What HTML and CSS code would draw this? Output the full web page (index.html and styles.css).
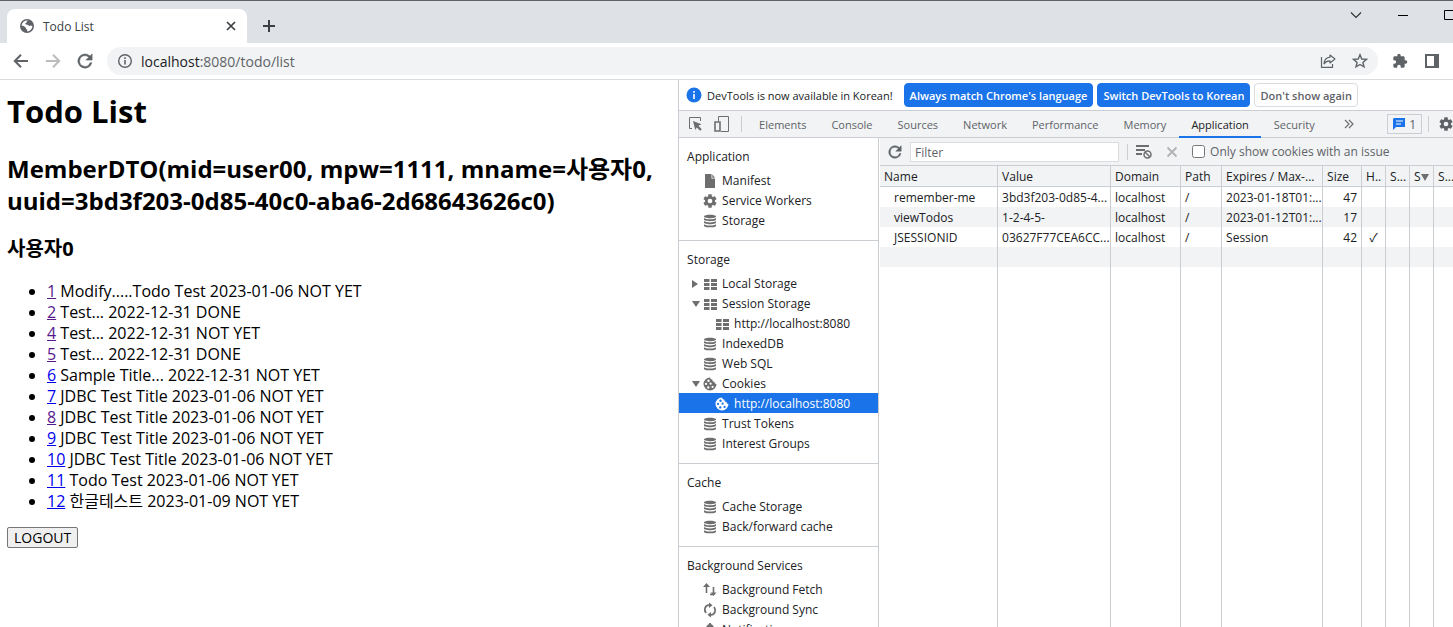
FILE: index.html
```html
<!DOCTYPE html>
<html lang="ko">

<head>
  <meta charset="UTF-8" />
  <meta name="viewport" content="width=device-width, initial-scale=1.0" />
  <title>Todo List</title>
  <link rel="stylesheet" href="styles.css">
</head>

<body>
  <!-- shared icons -->
  <svg class="sprite" aria-hidden="true">
    <symbol id="reload" viewBox="3 3 18 18">
      <path fill="currentColor" d="M17.65 6.35A8 8 0 1 0 19.73 14h-2.08A6 6 0 1 1 12 6c1.66 0 3.14.69 4.22 1.78L13 11h7V4z" stroke="currentColor" stroke-width=".6" />
    </symbol>
    <symbol id="database" viewBox="0 0 16 16">
      <path fill="currentColor" d="M2 3.5C2 1.2 14 1.2 14 3.5S2 5.800 2 3.500zM2 5c1.500 1.800 10.500 1.800 12 0v1.500c0 2.200-12 2.200-12 0zM2 8.100c1.500 1.800 10.500 1.800 12 0v1.500c0 2.200-12 2.200-12 0zM2 11.200c1.500 1.800 10.500 1.800 12 0v1.500c0 2.200-12 2.200-12 0z" />
    </symbol>
    <symbol id="grid" viewBox="0 0 16 16">
      <path fill="currentColor" d="M2 3h5.500v3H2zM9 3h6v3H9zM2 7h5.500v3H2zM9 7h6v3H9zM2 11h5.500v3H2zM9 11h6v3H9z" />
    </symbol>
    <symbol id="gear" viewBox="0 0 24 24">
      <path fill="currentColor" d="M19.430 12.980c.04-.320.07-.640.07-.980s-.03-.660-.07-.980l2.110-1.650c.190-.150.240-.420.120-.640l-2-3.460c-.120-.220-.390-.300-.610-.220l-2.490 1c-.520-.400-1.080-.730-1.690-.980l-.380-2.650A.488.488 0 0 0 14 2h-4c-.250 0-.460.180-.490.420l-.380 2.650c-.610.250-1.170.590-1.690.980l-2.490-1c-.230-.090-.490 0-.610.220l-2 3.460c-.130.220-.070.490.120.640l2.110 1.650c-.040.320-.070.650-.070.980s.030.660.070.980l-2.110 1.650c-.190.150-.240.420-.120.640l2 3.460c.120.220.390.300.610.220l2.490-1c.520.400 1.080.730 1.690.980l.380 2.650c.030.240.240.420.490.420h4c.250 0 .460-.180.490-.420l.380-2.650c.610-.250 1.170-.590 1.690-.980l2.490 1c.230.090.490 0 .610-.220l2-3.460c.120-.220.070-.490-.120-.640zM12 15.500a3.500 3.500 0 1 1 0-7 3.500 3.500 0 0 1 0 7z" />
    </symbol>
    <symbol id="cookie" viewBox="0 0 16 16">
      <path fill="currentColor" fill-rule="evenodd" d="M8 1.500a6.500 6.500 0 1 0 6.500 6.500c-1.300 0-2-.8-2-2-1.500 0-2.300-.9-2-2.200C9.200 3.600 8.300 2.800 8 1.500zM6.500 3.500a1.200 1.200 0 1 1 0 2.400 1.200 1.200 0 0 1 0-2.400zM4 6.800a1.100 1.100 0 1 1 0 2.200 1.100 1.100 0 0 1 0-2.200zM8.600 6.600a1.100 1.100 0 1 1 0 2.200 1.100 1.100 0 0 1 0-2.200zM6.300 10.200a1.200 1.200 0 1 1 0 2.400 1.200 1.200 0 0 1 0-2.400zM10.600 9.800a1.100 1.100 0 1 1 0 2.200 1.100 1.100 0 0 1 0-2.200z" />
    </symbol>
  </svg>

  <div class="browser">

    <header class="tab-strip">
      <div class="browser-tab">
        <svg class="icon16" viewBox="0 0 16 16">
          <circle cx="8" cy="8" r="7" fill="#5f6368" />
          <path fill="#fff" d="M9.500 2.600C8 3 7.600 3.700 7.800 4.600c-1.300.1-1.600.8-1.300 1.700.9.700 2.200.2 2.800 1 .4.900 1.500.9 2.200.3l1.900.4a5.500 5.500 0 0 1-5.200 5.500v-1.900c-.9-.2-1.200-.7-1.200-1.600L5.200 8.200l-2.600-.700A5.500 5.500 0 0 1 9.500 2.600z" />
        </svg>
        <span class="browser-tab-title">Todo List</span>
        <button class="icon-btn" aria-label="Close tab">
          <svg class="icon16" viewBox="0 0 16 16"><path d="M4 4l8 8M12 4l-8 8" stroke="#3c4043" stroke-width="1.700" /></svg>
        </button>
      </div>
      <button class="icon-btn new-tab" aria-label="New tab">
        <svg class="icon16" viewBox="0 0 16 16"><path d="M8 2v12M2 8h12" stroke="#3c4043" stroke-width="2" /></svg>
      </button>
      <div class="window-controls">
        <button class="icon-btn" aria-label="Search tabs">
          <svg width="12" height="12" viewBox="0 0 12 12"><path d="M1 3.500l5 5 5-5" fill="none" stroke="#333" stroke-width="1.200" /></svg>
        </button>
        <button class="icon-btn" aria-label="Minimize">
          <svg width="10" height="12" viewBox="0 0 10 12"><path d="M0 6.500h10" stroke="#000" /></svg>
        </button>
        <button class="icon-btn" aria-label="Maximize">
          <svg width="9" height="12" viewBox="0 0 9 12"><path d="M10 1.500H.500v9H10" fill="none" stroke="#000" /></svg>
        </button>
      </div>
    </header>

    <nav class="toolbar">
      <button class="icon-btn" aria-label="Back">
        <svg class="icon16" viewBox="0 0 16 16"><path d="M15 8H2M8 1.800L1.800 8 8 14.200" fill="none" stroke="#5f6368" stroke-width="2" /></svg>
      </button>
      <button class="icon-btn" aria-label="Forward">
        <svg class="icon16" viewBox="0 0 16 16"><path d="M1 8h13M8 1.800L14.200 8 8 14.200" fill="none" stroke="#babcbe" stroke-width="2" /></svg>
      </button>
      <button class="icon-btn" aria-label="Reload">
        <svg class="icon16"><use href="#reload" /></svg>
      </button>
      <div class="omnibox">
        <svg class="icon16" viewBox="0 0 16 16">
          <circle cx="8" cy="8" r="6.300" fill="none" stroke="#5f6368" stroke-width="1.400" />
          <path d="M8 7v4.500M8 4.300V6" stroke="#5f6368" stroke-width="1.600" />
        </svg>
        <a class="url" href="#">localhost<span>:8080/todo/list</span></a>
        <button class="icon-btn" aria-label="Share">
          <svg class="icon16" viewBox="0 0 16 16" fill="none" stroke="#5f6368" stroke-width="1.200">
            <path d="M1.500 4v10.400h11V11" />
            <path d="M10 2l5 4-5 4V7.800C7.500 7.800 5.500 8.600 4 10.800 4.400 7 6.500 4.600 10 4.200z" stroke-linejoin="round" />
          </svg>
        </button>
        <button class="icon-btn" aria-label="Bookmark">
          <svg class="icon16" viewBox="0 0 16 16"><path d="M8 1.800l1.800 4.200 4.600.4-3.500 3 1.100 4.500L8 11.500l-4 2.400 1.100-4.500-3.500-3 4.600-.4z" fill="none" stroke="#5f6368" stroke-width="1.400" /></svg>
        </button>
      </div>
      <button class="icon-btn" aria-label="Extensions">
        <svg class="icon16" viewBox="0 0 24 24"><path fill="#5f6368" d="M20.500 11H19V7c0-1.100-.9-2-2-2h-4V3.500a2.500 2.500 0 0 0-5 0V5H4c-1.100 0-2 .9-2 2v3.800h1.500a2.700 2.700 0 0 1 0 5.400H2V20c0 1.100.9 2 2 2h3.800v-1.500a2.700 2.700 0 0 1 5.400 0V22H17c1.100 0 2-.9 2-2v-4h1.500a2.500 2.500 0 0 0 0-5z" /></svg>
      </button>
      <button class="icon-btn" aria-label="Side panel">
        <svg class="icon16" viewBox="0 0 16 16"><path d="M2 2h12v12H2z" fill="none" stroke="#5f6368" stroke-width="2" /><path d="M10 2h4v12h-4z" fill="#5f6368" /></svg>
      </button>
    </nav>

    <div class="content">

      <main class="page">
        <h1>Todo List</h1>
        <h2>MemberDTO(mid=user00, mpw=1111, mname=사용자0, uuid=3bd3f203-0d85-40c0-aba6-2d68643626c0)</h2>
        <h3>사용자0</h3>
        <ul>
          <li><a class="visited" href="#">1</a> Modify.....Todo Test 2023-01-06 NOT YET</li>
          <li><a class="visited" href="#">2</a> Test... 2022-12-31 DONE</li>
          <li><a class="visited" href="#">4</a> Test... 2022-12-31 NOT YET</li>
          <li><a class="visited" href="#">5</a> Test... 2022-12-31 DONE</li>
          <li><a href="#">6</a> Sample Title... 2022-12-31 NOT YET</li>
          <li><a href="#">7</a> JDBC Test Title 2023-01-06 NOT YET</li>
          <li><a class="visited" href="#">8</a> JDBC Test Title 2023-01-06 NOT YET</li>
          <li><a href="#">9</a> JDBC Test Title 2023-01-06 NOT YET</li>
          <li><a href="#">10</a> JDBC Test Title 2023-01-06 NOT YET</li>
          <li><a href="#">11</a> Todo Test 2023-01-06 NOT YET</li>
          <li><a href="#">12</a> 한글테스트 2023-01-09 NOT YET</li>
        </ul>
        <form onsubmit="return false">
          <button class="logout">LOGOUT</button>
        </form>
      </main>

      <section class="devtools">

        <div class="infobar">
          <svg class="icon16" viewBox="0 0 16 16">
            <circle cx="8" cy="8" r="7.500" fill="#1a73e8" />
            <path d="M8 7v5M8 4v1.800" stroke="#fff" stroke-width="1.600" />
          </svg>
          <span>DevTools is now available in Korean!</span>
          <button class="info-btn primary">Always match Chrome's language</button>
          <button class="info-btn primary">Switch DevTools to Korean</button>
          <button class="info-btn">Don't show again</button>
        </div>

        <div class="panel-bar">
          <div class="panel-tools">
            <button class="icon-btn" aria-label="Inspect">
              <svg class="icon16" viewBox="0 0 16 16"><path d="M5 12.500H2.500v-11h11V5" fill="none" stroke="#6e6e6e" /><path d="M6 5l8.500 3.300-3.100 1.500 3.400 3.400-1.600 1.600-3.400-3.400L8.300 14z" fill="#6e6e6e" /></svg>
            </button>
            <button class="icon-btn" aria-label="Toggle device">
              <svg class="icon16" viewBox="0 0 16 16" fill="none" stroke="#6e6e6e"><path d="M4.500 5V.500h10v15H7" /><path d="M1 6h5v9H1z" stroke-width="1.600" /></svg>
            </button>
            <span class="divider"></span>
          </div>
          <div class="panel-tabs">
            <button class="panel-tab">Elements</button>
            <button class="panel-tab">Console</button>
            <button class="panel-tab">Sources</button>
            <button class="panel-tab">Network</button>
            <button class="panel-tab">Performance</button>
            <button class="panel-tab">Memory</button>
            <button class="panel-tab active">Application</button>
            <button class="panel-tab">Security</button>
          </div>
          <button class="icon-btn more" aria-label="More tabs">
            <svg width="10" height="10" viewBox="0 0 10 10"><path d="M1 1l4 4-4 4M5 1l4 4-4 4" fill="none" stroke="#6e6e6e" stroke-width="1.200" /></svg>
          </button>
          <div class="panel-right">
            <button class="issues">
              <svg width="12" height="12" viewBox="0 0 12 12"><path d="M1 0h11v9H3l-3 3V1z" fill="#1a73e8" /><path d="M3 3h7M3 6h5" stroke="#fff" /></svg>
              1
            </button>
            <span class="divider"></span>
            <button class="icon-btn" aria-label="Settings"><svg class="icon16"><use href="#gear" /></svg></button>
          </div>
        </div>

        <div class="application">

          <aside class="sidebar">
            <div class="group">
              <p>Application</p>
              <ul>
                <li><svg class="icon16" viewBox="0 0 16 16"><path fill="currentColor" d="M3 1h6.500v4.500H13V15H3z" /><path fill="currentColor" d="M10.300 1.300L13 4.700h-2.700z" /></svg>Manifest</li>
                <li><svg class="icon16"><use href="#gear" /></svg>Service Workers</li>
                <li><svg class="icon16"><use href="#database" /></svg>Storage</li>
              </ul>
            </div>
            <div class="group">
              <p>Storage</p>
              <ul>
                <li class="closed"><svg class="icon16"><use href="#grid" /></svg>Local Storage</li>
                <li class="opened"><svg class="icon16"><use href="#grid" /></svg>Session Storage</li>
                <li class="child"><svg class="icon16"><use href="#grid" /></svg>http://localhost:8080</li>
                <li><svg class="icon16"><use href="#database" /></svg>IndexedDB</li>
                <li><svg class="icon16"><use href="#database" /></svg>Web SQL</li>
                <li class="opened"><svg class="icon16"><use href="#cookie" /></svg>Cookies</li>
                <li class="child selected"><svg class="icon16"><use href="#cookie" /></svg>http://localhost:8080</li>
                <li><svg class="icon16"><use href="#database" /></svg>Trust Tokens</li>
                <li><svg class="icon16"><use href="#database" /></svg>Interest Groups</li>
              </ul>
            </div>
            <div class="group">
              <p>Cache</p>
              <ul>
                <li><svg class="icon16"><use href="#database" /></svg>Cache Storage</li>
                <li><svg class="icon16"><use href="#database" /></svg>Back/forward cache</li>
              </ul>
            </div>
            <div class="group">
              <p>Background Services</p>
              <ul>
                <li><svg class="icon16" viewBox="0 0 16 16"><path d="M4.500 11V3M11.500 5v8M8 12.500h3" fill="none" stroke="currentColor" stroke-width="1.600" /><path fill="currentColor" d="M1 5l3.500-4L8 5zM8.500 10.500h6L11.500 14z" /></svg>Background Fetch</li>
                <li><svg class="icon16" viewBox="0 0 16 16"><path d="M7 3.200C3 3.200 1.500 8 4 11M9 12.800c4 0 5.500-4.800 3-7.800" fill="none" stroke="currentColor" stroke-width="1.800" /><path fill="currentColor" d="M7 .500l3.500 2.800L7 6zM9 10v5.500l-3.500-2.800z" /></svg>Background Sync</li>
                <li><svg class="icon16" viewBox="0 0 16 16"><path fill="currentColor" d="M8 1c.8 0 1.200.5 1.200 1.200C11.500 3 12 5 12 7v3.500l1.500 1.500v1h-11v-1L4 10.500V7c0-2 .5-4 2.800-4.800C6.800 1.500 7.200 1 8 1z" /></svg>Notifications</li>
              </ul>
            </div>
          </aside>

          <div class="cookies">
            <div class="cookie-bar">
              <button class="icon-btn" aria-label="Refresh"><svg class="icon14"><use href="#reload" /></svg></button>
              <input class="filter" type="text" placeholder="Filter" aria-label="Filter">
              <span class="divider"></span>
              <button class="icon-btn" aria-label="Clear all">
                <svg class="icon16" viewBox="0 0 16 16" fill="none" stroke="#6e6e6e"><path d="M0 2h13M0 6h9M0 10h6" stroke-width="2" /><circle cx="11.500" cy="10.500" r="3.500" stroke-width="1.500" /><path d="M9 8l5 5" stroke-width="1.400" /></svg>
              </button>
              <button class="icon-btn delete" aria-label="Delete selected">
                <svg width="12" height="12" viewBox="0 0 12 12"><path d="M1.500 1.500l9 9M10.500 1.500l-9 9" stroke="#b0b2b5" stroke-width="1.800" /></svg>
              </button>
              <label class="only-issues"><input type="checkbox">Only show cookies with an issue</label>
            </div>

            <table>
              <colgroup>
                <col class="c-name">
                <col class="c-value">
                <col class="c-domain">
                <col class="c-path">
                <col class="c-expires">
                <col class="c-size">
                <col class="c-flag">
                <col class="c-flag">
                <col class="c-flag">
                <col>
              </colgroup>
              <thead>
                <tr>
                  <th>Name</th>
                  <th>Value</th>
                  <th>Domain</th>
                  <th>Path</th>
                  <th>Expires / Max-...</th>
                  <th>Size</th>
                  <th>H..</th>
                  <th>S...</th>
                  <th>S<span class="sort"></span></th>
                  <th>S...</th>
                </tr>
              </thead>
              <tbody>
                <tr>
                  <td>remember-me</td>
                  <td>3bd3f203-0d85-4...</td>
                  <td>localhost</td>
                  <td>/</td>
                  <td>2023-01-18T01:...</td>
                  <td>47</td>
                  <td></td><td></td><td></td><td></td>
                </tr>
                <tr>
                  <td>viewTodos</td>
                  <td>1-2-4-5-</td>
                  <td>localhost</td>
                  <td>/</td>
                  <td>2023-01-12T01:...</td>
                  <td>17</td>
                  <td></td><td></td><td></td><td></td>
                </tr>
                <tr>
                  <td>JSESSIONID</td>
                  <td>03627F77CEA6CC...</td>
                  <td>localhost</td>
                  <td>/</td>
                  <td>Session</td>
                  <td>42</td>
                  <td class="check">✓</td><td></td><td></td><td></td>
                </tr>
                <tr>
                  <td></td><td></td><td></td><td></td><td></td><td></td><td></td><td></td><td></td><td></td>
                </tr>
                <tr class="filler">
                  <td></td><td></td><td></td><td></td><td></td><td></td><td></td><td></td><td></td><td></td>
                </tr>
              </tbody>
            </table>
          </div>

        </div>
      </section>

    </div>
  </div>
</body>

</html>
```
FILE: styles.css
```css
* {
  box-sizing: border-box;
}

body {
  margin: 0;
  font-family: "Open Sans", "Noto Sans CJK KR", sans-serif;
  font-size: 12px;
  color: #202124;
}

ul {
  margin: 0;
  padding: 0;
  list-style: none;
}

button,
input {
  font-family: inherit;
  font-size: inherit;
}

svg {
  display: block;
  flex: none;
}

.sprite {
  position: absolute;
  width: 0;
  height: 0;
}

.icon16 {
  width: 16px;
  height: 16px;
}

.icon14 {
  width: 14px;
  height: 14px;
}

.icon-btn {
  flex: none;
  padding: 0;
  border: none;
  background: none;
  color: #5f6368;
}

.browser {
  display: flex;
  flex-direction: column;
  height: 100vh;
  overflow: hidden;
  background: #fff;
}

/* tab strip */
.tab-strip {
  display: flex;
  height: 43px;
  padding-left: 7px;
  border-top: 1px solid #5f6368;
  background: #dee1e6;
}

.browser-tab {
  display: flex;
  align-items: center;
  gap: 8px;
  width: 240px;
  margin-top: 8px;
  padding: 0 8px 0 12px;
  border-radius: 8px 8px 0 0;
  background: #fff;
  color: #3c4043;
}

.browser-tab-title {
  flex: 1;
}

.new-tab {
  margin: 8px 0 0 14px;
}

.window-controls {
  display: flex;
  align-items: flex-start;
  gap: 36px;
  margin-left: auto;
  padding-top: 8px;
}

/* toolbar */
.toolbar {
  display: flex;
  align-items: center;
  gap: 16px;
  height: 37px;
  padding: 0 13px;
  border-bottom: 1px solid #dadce0;
}

.omnibox {
  flex: 1;
  display: flex;
  align-items: center;
  gap: 16px;
  height: 28px;
  margin: 0 -2px;
  padding: 0 10px;
  border-radius: 14px;
  background: #f1f3f4;
}

.url {
  flex: 1;
  margin-left: -8px;
  font-size: 14px;
  color: #202124;
  text-decoration: none;
}

.url span {
  color: #5f6368;
}

.content {
  flex: 1;
  display: grid;
  grid-template-columns: minmax(0, 7fr) minmax(0, 8fr);
  min-height: 0;
}

/* todo page */
.page {
  padding: 10px 7px;
  color: #000;
  font-size: 16px;
  line-height: 21px;
}

.page h1 {
  margin: 0 0 20px;
  font-size: 31px;
  line-height: 43px;
}

.page h2 {
  margin: 0 0 19px;
  font-size: 24px;
  line-height: 32px;
}

.page h3 {
  margin: 0 0 19px;
  font-size: 20px;
  line-height: 26px;
}

.page ul {
  margin-bottom: 15px;
  padding-left: 40px;
  list-style: disc;
}

.page a {
  color: #0000ee;
}

.page a.visited {
  color: #551a8b;
}

.logout {
  display: block;
  height: 21px;
  padding: 0 6px;
  border: 1px solid #767676;
  border-radius: 2px;
  background: #efefef;
  color: #000;
  font-size: 14px;
  line-height: 18px;
}

/* devtools */
.devtools {
  display: flex;
  flex-direction: column;
  min-height: 0;
  border-left: 1px solid #cacdd1;
}

.divider {
  width: 1px;
  height: 16px;
  background: #cacdd1;
}

.infobar {
  display: flex;
  align-items: center;
  gap: 4px;
  height: 31px;
  padding-left: 7px;
  border-bottom: 1px solid #cacdd1;
  font-size: 11px;
  white-space: nowrap;
}

.infobar span {
  margin: 0 7px 0 1px;
}

.info-btn {
  height: 24px;
  padding: 0 5px;
  border: 1px solid #dadce0;
  border-radius: 4px;
  background: #fff;
  color: #5f6368;
  font-weight: 600;
}

.info-btn.primary {
  border-color: #1a73e8;
  background: #1a73e8;
  color: #fff;
}

.panel-bar {
  display: flex;
  height: 27px;
  border-bottom: 1px solid #cacdd1;
  background: #f1f3f4;
}

.panel-tools {
  display: flex;
  align-items: center;
  gap: 11px;
  padding: 0 5px 0 8px;
}

.panel-tabs {
  display: flex;
  gap: 1px;
  font-size: 11px;
}

.panel-tab {
  height: 27px;
  padding: 2px 12px 0;
  border: none;
  border-bottom: 2px solid transparent;
  background: none;
  color: #5f6368;
}

.panel-tab.active {
  border-color: #1a73e8;
  color: #202124;
}

.more {
  margin-left: 17px;
}

.panel-right {
  display: flex;
  align-items: center;
  gap: 6px;
  margin: 0 -1px 0 auto;
  overflow: hidden;
}

.panel-right .icon-btn {
  margin-left: 3px;
}

.issues {
  display: flex;
  align-items: center;
  gap: 4px;
  height: 20px;
  padding: 0 5px;
  border: 1px solid #cacdd1;
  background: none;
  color: #5f6368;
}

.application {
  flex: 1;
  display: flex;
  min-height: 0;
}

.sidebar {
  flex: none;
  width: 200px;
  overflow: hidden;
  border-right: 1px solid #cacdd1;
  line-height: 20px;
}

.group {
  padding: 9px 0 10px;
}

.group + .group {
  border-top: 1px solid #cacdd1;
}

.group p {
  margin: 0 0 3px;
  padding-left: 8px;
}

.group li {
  display: flex;
  align-items: center;
  gap: 4px;
  height: 20px;
  padding: 2px 0 0 23px;
}

.group li svg {
  color: #6e6e6e;
}

.group .child {
  padding-left: 35px;
}

.group .selected,
.group .selected svg {
  background: #1a73e8;
  color: #fff;
}

.group .closed,
.group .opened {
  padding-left: 13px;
}

.group .closed::before {
  content: "";
  border: 4px solid transparent;
  border-left: 6px solid #6e6e6e;
  border-right: none;
}

.group .opened::before {
  content: "";
  margin-right: -2px;
  border: 4px solid transparent;
  border-top: 6px solid #6e6e6e;
  border-bottom: none;
}

/* cookies table */
.cookies {
  flex: 1;
  display: flex;
  flex-direction: column;
  min-width: 0;
  margin-left: 1px;
}

.cookie-bar {
  display: flex;
  align-items: center;
  gap: 8px;
  height: 28px;
  padding-left: 8px;
  border-bottom: 1px solid #cacdd1;
  background: #f1f3f4;
  color: #5f6368;
  white-space: nowrap;
}

.filter {
  width: 209px;
  height: 20px;
  padding: 2px 4px 0;
  border: 1px solid #dadce0;
  background: #fff;
}

.filter::placeholder {
  color: #5f6368;
}

.delete {
  margin: 0 6px;
}

.only-issues {
  display: flex;
  align-items: center;
  gap: 5px;
}

.only-issues input {
  width: 13px;
  height: 13px;
  margin: 0;
}

table {
  flex: 1;
  width: 100%;
  table-layout: fixed;
  border-collapse: separate;
  border-spacing: 0;
}

.c-name {
  width: 118px;
}

.c-value {
  width: 113px;
}

.c-domain {
  width: 70px;
}

.c-path {
  width: 41px;
}

.c-expires {
  width: 101px;
}

.c-size {
  width: 39px;
}

.c-flag {
  width: 24px;
}

th,
td {
  height: 20px;
  padding: 2px 0 0 4px;
  border-right: 1px solid #cacdd1;
  font-weight: 400;
  line-height: 18px;
  text-align: left;
  white-space: nowrap;
  overflow: hidden;
}

th {
  height: 21px;
  border-bottom: 1px solid #cacdd1;
  background: #f1f3f4;
}

th:last-child,
td:last-child {
  border-right: none;
}

td:first-child {
  padding-left: 14px;
}

td:nth-child(6) {
  padding-right: 4px;
  text-align: right;
}

tbody tr:nth-child(even) {
  background: #f1f3f4;
}

.check {
  padding-left: 0;
  text-align: center;
}

.filler td {
  height: auto;
}

.sort {
  display: inline-block;
  border: 4px solid transparent;
  border-top: 7px solid #6e6e6e;
  border-bottom: none;
}
```
